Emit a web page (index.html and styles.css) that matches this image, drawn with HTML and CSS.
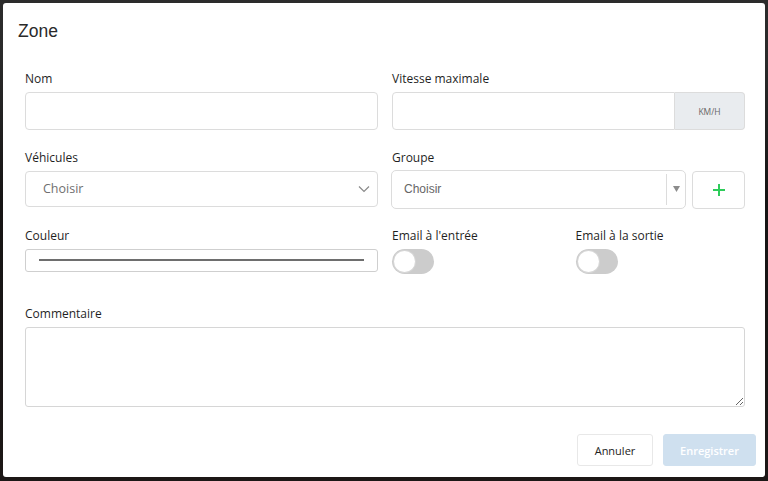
FILE: index.html
```html
<!DOCTYPE html>
<html lang="fr">
<head>
<meta charset="utf-8">
<title>Zone</title>
<link rel="stylesheet" href="styles.css">
</head>
<body>
<div class="backdrop">
  <div class="modal">
    <div class="modal-header">
      <h4 class="modal-title">Zone</h4>
    </div>
    <div class="modal-body">
      <div class="row row-1">
        <div class="field span-2">
          <label class="label">Nom</label>
          <input class="input" type="text">
        </div>
        <div class="field span-2">
          <label class="label">Vitesse maximale</label>
          <div class="input-group">
            <input class="input grow" type="text">
            <span class="addon">KM/H</span>
          </div>
        </div>
      </div>

      <div class="row row-2">
        <div class="field span-2">
          <label class="label">Véhicules</label>
          <div class="select">
            <span class="placeholder">Choisir</span>
            <svg class="chevron" width="12" height="8" viewBox="0 0 12 8"><polyline points="1,1.5 6,6.5 11,1.5" fill="none" stroke="#8a8a8a" stroke-width="1.2"/></svg>
          </div>
        </div>
        <div class="field span-2">
          <label class="label label-tight">Groupe</label>
          <div class="group-line">
            <div class="combo">
              <span class="combo-text">Choisir</span>
              <span class="combo-arrow">
                <svg width="7" height="6" viewBox="0 0 7 6"><polygon points="0,0 7,0 3.5,6" fill="#8c8c8c"/></svg>
              </span>
            </div>
            <button class="add-btn" type="button">
              <svg width="14" height="14" viewBox="0 0 14 14"><path d="M7 1v12M1 7h12" stroke="#2ecc5a" stroke-width="2"/></svg>
            </button>
          </div>
        </div>
      </div>

      <div class="row row-3">
        <div class="field span-2">
          <label class="label">Couleur</label>
          <div class="color-input"><span class="color-swatch"></span></div>
        </div>
        <div class="field">
          <label class="label">Email à l'entrée</label>
          <span class="toggle"><span class="knob"></span></span>
        </div>
        <div class="field">
          <label class="label">Email à la sortie</label>
          <span class="toggle"><span class="knob"></span></span>
        </div>
      </div>

      <div class="row row-4">
        <div class="field span-4">
          <label class="label">Commentaire</label>
          <textarea class="textarea"></textarea>
        </div>
      </div>
    </div>
    <div class="modal-footer">
      <button class="btn btn-default" type="button">Annuler</button>
      <button class="btn btn-primary" type="button">Enregistrer</button>
    </div>
  </div>
</div>
</body>
</html>
```

FILE: styles.css
```css
* {
  box-sizing: border-box;
}

html, body {
  margin: 0;
  height: 100%;
}

body {
  background: linear-gradient(180deg, #2c2c2c 0, #2a2a2a 60px, #161414 200px, #1c1716 100%);
  font-family: "Open Sans", "Liberation Sans", sans-serif;
  color: #333;
}

.backdrop {
  padding: 3px;
}

.modal {
  width: 762px;
  height: 474px;
  background: #fff;
  border-radius: 3px;
  display: flex;
  flex-direction: column;
}

.modal-header {
  padding: 17px 15px 0;
}

.modal-title {
  margin: 0;
  font-family: "Liberation Sans", Arial, sans-serif;
  font-size: 17.5px;
  line-height: 22px;
  font-weight: normal;
  color: #2a2a2a;
}

.modal-body {
  padding: 28px 20px 0 22px;
}

.row {
  display: grid;
  grid-template-columns: repeat(4, 1fr);
  column-gap: 14px;
}

.row-1 { margin-bottom: 18.5px; }
.row-2 { margin-bottom: 18px; }
.row-3 { margin-bottom: 31px; }

.span-2 { grid-column: span 2; }
.span-4 { grid-column: span 4; }

.field {
  display: flex;
  flex-direction: column;
  min-width: 0;
}

.label {
  display: block;
  font-size: 12px;
  line-height: 17px;
  font-weight: 500;
  color: #1f1f1f;
  margin-bottom: 5px;
}

.label-tight {
  margin-bottom: 4px;
}

.input {
  height: 38px;
  width: 100%;
  border: 1px solid #dcdcdc;
  border-radius: 4px;
  background: #fff;
  padding: 0 10px;
  font: inherit;
  outline: none;
}

.input-group {
  display: flex;
  height: 38px;
}

.input-group .grow {
  flex: 1;
  border-radius: 4px 0 0 4px;
  min-width: 0;
}

.addon {
  width: 70px;
  display: flex;
  align-items: center;
  justify-content: center;
  background: #e9ecef;
  border: 1px solid #dcdcdc;
  border-left: none;
  border-radius: 0 4px 4px 0;
  font-size: 8.5px;
  color: #666;
}

.select {
  height: 36px;
  border: 1px solid #dcdcdc;
  border-radius: 4px;
  display: flex;
  align-items: center;
  justify-content: space-between;
  padding: 0 7px 0 17px;
}

.placeholder {
  font-size: 12.5px;
  color: #6f6f6f;
  font-weight: 400;
}

.chevron {
  display: block;
}

.group-line {
  display: flex;
  gap: 6px;
  margin-left: -1px;
}

.combo {
  flex: 1;
  height: 39px;
  border: 1px solid #dcdcdc;
  border-radius: 5px;
  display: flex;
  align-items: center;
}

.combo-text {
  flex: 1;
  padding-left: 12px;
  font-family: "Liberation Sans", Arial, sans-serif;
  font-size: 12px;
  color: #666;
}

.combo-arrow {
  width: 19px;
  height: 31px;
  border-left: 1px solid #dcdcdc;
  display: flex;
  align-items: center;
  justify-content: center;
}

.combo-arrow svg {
  display: block;
  margin-left: 1px;
}

.add-btn {
  width: 53px;
  height: 38px;
  margin-top: 1px;
  border: 1px solid #dcdcdc;
  border-radius: 4px;
  background: #fff;
  display: flex;
  align-items: center;
  justify-content: center;
  padding: 0;
}

.add-btn svg {
  display: block;
}

.color-input {
  height: 23px;
  border: 1px solid #cfcfcf;
  border-radius: 3px;
  display: flex;
  align-items: center;
  padding: 0 13px;
}

.color-swatch {
  flex: 1;
  height: 2px;
  background: #6e6e6e;
}

.toggle {
  width: 42px;
  height: 25px;
  border-radius: 13px;
  background: #cccccc;
  display: flex;
  align-items: center;
  padding: 0 2px;
}

.knob {
  width: 21px;
  height: 21px;
  border-radius: 50%;
  background: #fff;
  box-shadow: 0 0 0 1px #d6d6d6;
}

.textarea {
  height: 80px;
  width: 100%;
  border: 1px solid #d6d6d6;
  border-radius: 3px;
  font: inherit;
  resize: both;
  outline: none;
}

.modal-footer {
  margin-top: 27.5px;
  padding: 0 9px 10px 0;
  display: flex;
  justify-content: flex-end;
  gap: 10px;
}

.btn {
  height: 32px;
  border-radius: 3px;
  font-family: "Open Sans", "Liberation Sans", sans-serif;
  font-size: 11px;
  padding: 0;
}

.btn-default {
  width: 76px;
  background: #fff;
  border: 1px solid #e8e8e8;
  color: #222;
  font-weight: 500;
}

.btn-primary {
  width: 93px;
  background: #cfe0ef;
  border: 1px solid #cfe0ef;
  color: #fff;
  font-weight: 600;
}
```
